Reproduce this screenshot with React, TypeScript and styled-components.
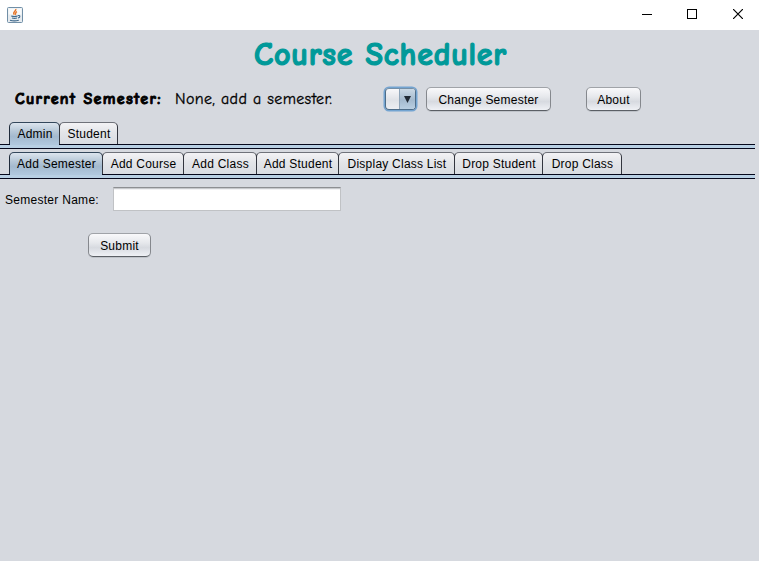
import React from "react";
import styled, { createGlobalStyle } from "styled-components";

const GlobalStyle = createGlobalStyle`
  * { box-sizing: border-box; }
  body { margin: 0; background: #d6d9df; overflow: hidden; }
  button, input { font: inherit; color: inherit; }
`;

const Window = styled.div`
  width: 759px;
  height: 561px;
  overflow: hidden;
  background: #d6d9df;
  color: #000;
  font: 12px/16px "Liberation Sans", Arial, sans-serif;
  letter-spacing: 0.23px;
`;

const TitleBar = styled.header`
  display: flex;
  align-items: center;
  height: 30px;
  padding-left: 7px;
  background: #fff;
  svg { display: block; }
`;

const WindowControls = styled.div`
  display: flex;
  margin-left: auto;
`;

const WindowControl = styled.button`
  display: grid;
  place-items: center;
  width: 46px;
  height: 30px;
  padding: 0;
  border: 0;
  background: none;
  &:first-child { width: 44px; }
  &:last-child { width: 44px; padding-left: 2px; padding-bottom: 2px; }
`;

const Title = styled.h1`
  height: 48px;
  margin: 0;
  padding-left: 254px;
  color: #009999;
  font: 700 32px/49px "Comic Sans MS", "Comic Neue", Lato, sans-serif;
  letter-spacing: 0.78px;
  white-space: nowrap;
  -webkit-text-stroke: 1.2px #009999;
`;

const SemesterBar = styled.div`
  display: flex;
  align-items: center;
  height: 42px;
  padding-left: 14px;
`;

const SemesterText = styled.span<{ $bold?: boolean; $width: number }>`
  flex: none;
  width: ${(p) => p.$width}px;
  padding-left: ${(p) => (p.$bold ? 1 : 0)}px;
  font: ${(p) => (p.$bold ? 900 : 400)} 16px/22px "Comic Sans MS", "Comic Neue", Lato, sans-serif;
  letter-spacing: ${(p) => (p.$bold ? 1.33 : 0.36)}px;
  -webkit-text-stroke: ${(p) => (p.$bold ? 0.9 : 0.3)}px #000;
  white-space: nowrap;
`;

const ComboBox = styled.button`
  display: flex;
  flex: none;
  width: 31px;
  height: 22px;
  margin: 0 10px 0 1px;
  padding: 0;
  border: 1px solid #4e6d89;
  border-top-color: #7590a8;
  border-radius: 4px;
  overflow: hidden;
  background: linear-gradient(#f8f8fa, #dfe2e7 55%, #eceef2);
  box-shadow: 0 0 0 1.5px #73a4d1;
`;

const ComboArrow = styled.span`
  display: grid;
  place-items: center;
  width: 16px;
  height: 20px;
  margin-left: auto;
  border-left: 1px solid #8fa5b9;
  background: linear-gradient(#cbd9e5, #a4bace 55%, #b9cfe2);
`;

const Button = styled.button<{ $width: number }>`
  flex: none;
  width: ${(p) => p.$width}px;
  height: 24px;
  padding: 1px 0 0;
  border: 1px solid #85888d;
  border-top-color: #a0a3a8;
  border-bottom-color: #5b5f65;
  border-radius: 5px;
  background: linear-gradient(#f9f9fb 0%, #e6e8ec 40%, #d7dae0 62%, #eff1f5 100%);
  box-shadow: 0 1px 0 #bfc3c9;
  letter-spacing: inherit;
  white-space: nowrap;
`;

const AboutSlot = styled.div`
  margin-left: 35px;
`;

const TabStrip = styled.nav`
  display: flex;
  width: 755px;
  height: 22px;
  padding-left: 9px;
`;

const Tab = styled.button<{ $width: number; $selected?: boolean }>`
  flex: none;
  width: ${(p) => p.$width + 1}px;
  height: 22px;
  margin-right: -1px;
  padding: 0 0 0 1px;
  border: 1px solid ${(p) => (p.$selected ? "#1e2a3a" : "#33363f")};
  border-top-color: ${(p) => (p.$selected ? "#33475b" : "#6f727a")};
  border-bottom: 0;
  border-radius: 5px 5px 0 0;
  background: ${(p) =>
    p.$selected
      ? "linear-gradient(#dce5ee, #b6c7d7 40%, #a3b9ce 65%, #b0c7dd)"
      : "linear-gradient(#f3f3f5, #e3e5e9 45%, #d9dce2)"};
  letter-spacing: inherit;
  white-space: nowrap;
`;

const TabRail = styled.div<{ $selectedWidth: number }>`
  width: 755px;
  height: 5px;
  padding-left: 10px;
  border: solid #05071b;
  border-width: 1px 0;
  background: #b8cfe3;
  &::before {
    content: "";
    display: block;
    width: ${(p) => p.$selectedWidth}px;
    height: 1px;
    margin-top: -1px;
    background: #b0c7dd;
  }
`;

const Content = styled.main`
  padding-top: 2px;
`;

const Tabs = styled.section`
  & + & { padding-top: 3px; }
`;

const Field = styled.label`
  display: flex;
  align-items: center;
  height: 24px;
  margin-top: 8px;
  padding-left: 5px;
  white-space: nowrap;
`;

const FieldName = styled.span`
  width: 108px;
  padding-top: 1px;
  letter-spacing: 0.28px;
`;

const TextInput = styled.input`
  width: 228px;
  height: 24px;
  padding: 0 6px;
  border: 1px solid #c0c2c5;
  border-top-color: #8d8f92;
  border-radius: 0;
  outline: 0;
  background: #fff;
  box-shadow: inset 0 1px 0 #c7c9cc, inset 0 2px 0 #f1f1f3;
`;

const Actions = styled.div`
  display: flex;
  padding: 22px 0 0 88px;
`;

const JavaIcon = () => (
  <svg width="16" height="16" viewBox="0 0 16 16" fill="none" aria-hidden="true">
    <rect x=".5" y=".5" width="15" height="15" rx="1" fill="#e6ebef" stroke="#718fa7" />
    <path d="M1.5 1.5h13v6h-13z" fill="#f8fafb" />
    <path d="M8.8 2c.8 2-3.9 2.9-1.5 5.6M10 4.6C7.5 5.7 9.5 6.2 8.2 7.8" stroke="#e77528" strokeWidth="1.4" />
    <path d="M4.2 9c2 .6 4.5.6 6.3 0M5 11c1.6.5 3.5.5 5 0M3 13.2c2.6.8 6.3.7 8.8 0M10.8 8.6c2.5-.6 2.9 1.6.2 2.5" stroke="#426b8d" strokeWidth="1.1" />
  </svg>
);

const primaryTabs = [
  { name: "Admin", width: 50 },
  { name: "Student", width: 58 },
];
const adminTabs = [
  { name: "Add Semester", width: 93 },
  { name: "Add Course", width: 81 },
  { name: "Add Class", width: 73 },
  { name: "Add Student", width: 82 },
  { name: "Display Class List", width: 116 },
  { name: "Drop Student", width: 88 },
  { name: "Drop Class", width: 79 },
];

const TabGroup = ({ tabs }: { tabs: { name: string; width: number }[] }) => (
  <Tabs>
    <TabStrip>
      {tabs.map((tab, index) => (
        <Tab key={tab.name} $width={tab.width} $selected={index === 0}>{tab.name}</Tab>
      ))}
    </TabStrip>
    <TabRail $selectedWidth={tabs[0].width - 1} />
  </Tabs>
);

export default function App() {
  return (
    <Window>
      <GlobalStyle />
      <TitleBar>
        <JavaIcon />
        <WindowControls>
          <WindowControl aria-label="Minimize">
            <svg width="10" height="10" shapeRendering="crispEdges"><path d="M0 4h10v1H0z" /></svg>
          </WindowControl>
          <WindowControl aria-label="Maximize">
            <svg width="10" height="10" shapeRendering="crispEdges" transform="translate(0 -1)"><path d="M.5.5h9v9h-9z" fill="none" stroke="#000" /></svg>
          </WindowControl>
          <WindowControl aria-label="Close">
            <svg width="10" height="10"><path d="M0 0l10 10M10 0L0 10" stroke="#000" strokeWidth="1.2" /></svg>
          </WindowControl>
        </WindowControls>
      </TitleBar>
      <Title>Course Scheduler</Title>
      <SemesterBar>
        <SemesterText $bold $width={161}>Current Semester:</SemesterText>
        <SemesterText $width={209}>None, add a semester.</SemesterText>
        <ComboBox aria-label="Semester">
          <ComboArrow>
            <svg width="7" height="7"><path d="M0 0h7L3.5 7z" fill="#202a35" /></svg>
          </ComboArrow>
        </ComboBox>
        <Button $width={125}>Change Semester</Button>
        <AboutSlot><Button $width={55}>About</Button></AboutSlot>
      </SemesterBar>
      <Content>
        <TabGroup tabs={primaryTabs} />
        <TabGroup tabs={adminTabs} />
        <Field>
          <FieldName>Semester Name:</FieldName>
          <TextInput aria-label="Semester Name" />
        </Field>
        <Actions><Button $width={63}>Submit</Button></Actions>
      </Content>
    </Window>
  );
}
